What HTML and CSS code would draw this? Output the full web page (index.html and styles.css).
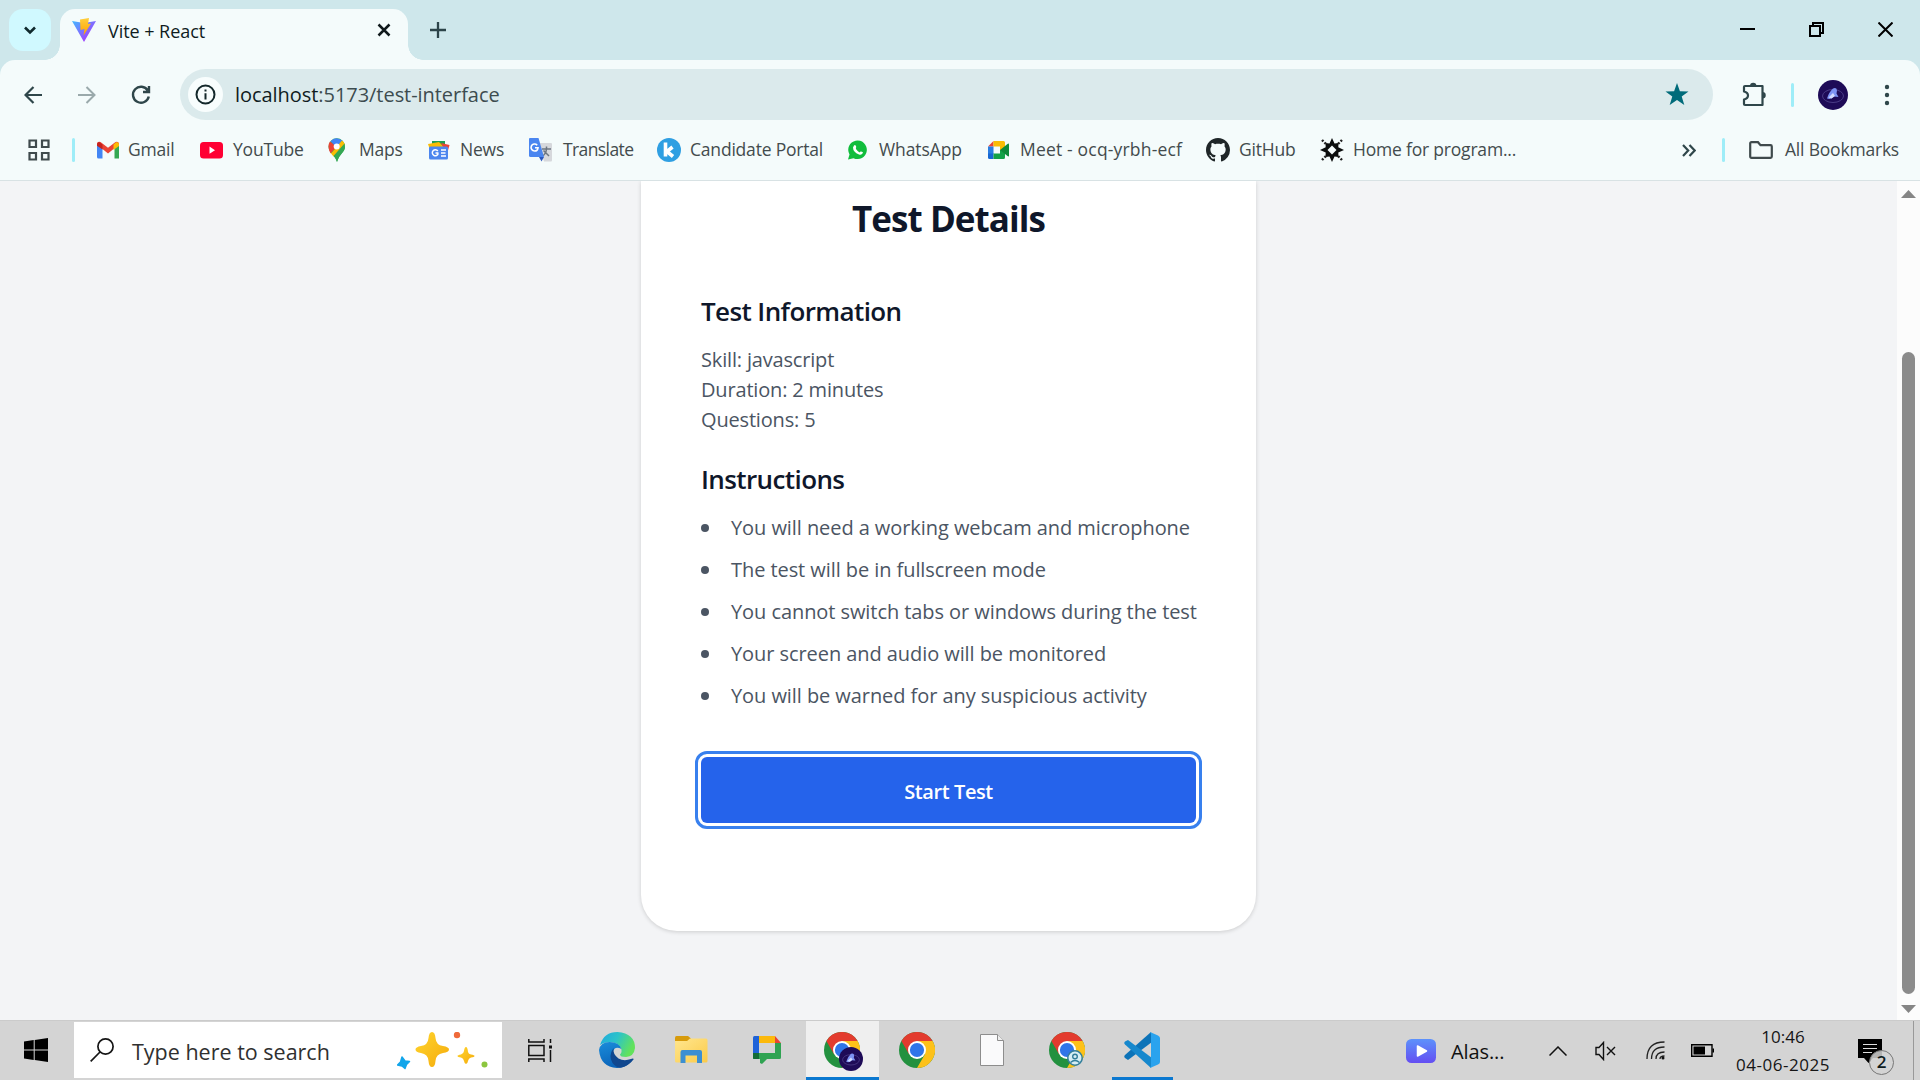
FILE: index.html
```html
<!DOCTYPE html>
<html lang="en">
<head>
<meta charset="utf-8">
<title>Vite + React</title>
<link rel="stylesheet" href="styles.css">
</head>
<body>
<svg class="defs" width="0" height="0" aria-hidden="true">
  <defs>
    <linearGradient id="vite-a" x1="0" y1="0" x2="1" y2="1"><stop offset="0" stop-color="#41b9ff"/><stop offset=".8" stop-color="#a53cff"/></linearGradient>
    <linearGradient id="vite-b" x1="0" y1="0" x2="0" y2="1"><stop offset="0" stop-color="#ffcf3d"/><stop offset="1" stop-color="#ffa000"/></linearGradient>
    <linearGradient id="edge-a" x1="0" y1="0" x2="1" y2=".4"><stop offset="0" stop-color="#1fa8e0"/><stop offset=".5" stop-color="#2cc3c9"/><stop offset="1" stop-color="#62e25c"/></linearGradient>
    <linearGradient id="edge-b" x1="0" y1="0" x2=".4" y2="1"><stop offset="0" stop-color="#1a8ddb"/><stop offset="1" stop-color="#0a62b8"/></linearGradient>
    <linearGradient id="play-a" x1="0" y1="0" x2="0" y2="1"><stop offset="0" stop-color="#5d92fb"/><stop offset="1" stop-color="#644ef2"/></linearGradient>
    <linearGradient id="star-a" x1="0" y1="0" x2="1" y2="1"><stop offset="0" stop-color="#ffd52e"/><stop offset="1" stop-color="#f5ab0c"/></linearGradient>
    <linearGradient id="folder-a" x1="0" y1="0" x2="1" y2="1"><stop offset="0" stop-color="#ffe68f"/><stop offset="1" stop-color="#fbcb4a"/></linearGradient>
    <symbol id="chrome" viewBox="0 0 36 36">
      <circle cx="18" cy="18" r="18" fill="#23913f"/>
      <path d="M18 9H33.6A18 18 0 0 1 18 36L25.8 22.5Z" fill="#fdc11a"/>
      <path d="M2.4 9A18 18 0 0 1 33.6 9H18L10.2 22.5Z" fill="#e33b2e"/>
      <circle cx="18" cy="18" r="9" fill="#fff"/><circle cx="18" cy="18" r="7.1" fill="#3075e8"/>
    </symbol>
    <symbol id="avatar" viewBox="0 0 30 30">
      <circle cx="15" cy="15" r="15" fill="#1e0b57"/>
      <ellipse cx="15" cy="16" rx="10.5" ry="6.5" fill="none" stroke="#4a3c86" stroke-width="1"/>
      <path d="M9 18.5Q11 12 15 8.500 18.500 7 19 10.500L18.500 13.500 20.500 17 16 16.500Q13 20 9 18.500Z" fill="#7d93f2"/><path d="M10.500 17.500 15 13 17 16 13.500 18.500Z" fill="#d3dcff"/>
    </symbol>
  </defs>
</svg>

<header class="browser">
  <div class="tabstrip">
    <button class="tab-search"><svg width="14" height="10" viewBox="0 0 14 10"><path d="M2 2.500 7 7.500 12 2.500" fill="none" stroke="#10292d" stroke-width="2.6"/></svg></button>
    <div class="tab">
      <svg width="24" height="24" viewBox="0 0 24 24"><path d="M0 3 12 5 24 3 12 24Z" fill="url(#vite-a)"/><path d="M8 1.500 17 0 16 6 19 5.500 11.500 17.500 12.500 11 8.500 12Z" fill="url(#vite-b)"/></svg>
      <span class="tab-title">Vite + React</span>
      <svg width="14" height="14" viewBox="0 0 14 14"><path d="M1.500 1.500 12.500 12.500M12.500 1.500 1.500 12.500" stroke="#10191b" stroke-width="2.5"/></svg>
    </div>
    <svg class="new-tab" width="16" height="16" viewBox="0 0 16 16"><path d="M8 0V16M0 8H16" stroke="#2c4449" stroke-width="2.3"/></svg>
    <div class="window-controls">
      <svg width="15" height="15" viewBox="0 0 15 15"><path d="M0 7H15" stroke="#000" stroke-width="2"/></svg>
      <svg width="15" height="15" viewBox="0 0 15 15" fill="none" stroke="#000" stroke-width="2"><path d="M1 4H11V14H1ZM4 4V1H14V11H11"/></svg>
      <svg width="15" height="15" viewBox="0 0 15 15"><path d="M.5.5 14.500 14.500M14.500.5.5 14.500" stroke="#000" stroke-width="2"/></svg>
    </div>
  </div>

  <div class="toolbar">
    <svg width="18" height="18" viewBox="0 0 18 18" fill="none" stroke="#2f464a" stroke-width="2.2"><path d="M18 9H2M9.500 1 1.500 9 9.500 17"/></svg>
    <svg width="18" height="18" viewBox="0 0 18 18" fill="none" stroke="#9aa9ab" stroke-width="2"><path d="M0 9H16M8.500 1 16.500 9 8.500 17"/></svg>
    <svg width="20" height="20" viewBox="0 0 20 20" fill="none" stroke="#2f464a" stroke-width="2.4"><path d="M16.800 5.500A8 8 0 1 0 17.800 11.500M18 1V7H12"/></svg>
    <div class="omnibox">
      <span class="site-info"><svg width="21" height="21" viewBox="0 0 21 21"><circle cx="10.500" cy="10.500" r="9" fill="none" stroke="#14282b" stroke-width="2"/><path d="M9.500 9.200H11.500V15.500H9.500ZM9.500 5.600H11.500V7.600H9.500Z" fill="#14282b"/></svg></span>
      <span class="url"><span class="host">localhost</span>:5173/test-interface</span>
      <svg width="24" height="23" viewBox="0 0 24 23"><path d="M12 0 14.900 8.200 23.500 8.400 16.700 13.600 19.300 22 12 17 4.700 22 7.300 13.600.5 8.400 9.100 8.200Z" fill="#006b7a"/></svg>
    </div>
    <svg class="extensions" width="26" height="26" viewBox="0 0 26 26"><path d="M4 4H21.500V23H4Q3 23 3 22V17.500Q7 16.500 7 13.500 7 10.500 3 9.500V5Q3 4 4 4Z" fill="none" stroke="#2f464a" stroke-width="2.2" stroke-linejoin="round"/><path d="M9 4A3.200 3.200 0 0 1 15.400 4ZM21.500 10A3.200 3.200 0 0 1 21.500 16.500Z" fill="#2f464a"/></svg>
    <i class="divider"></i>
    <svg class="profile" width="30" height="30"><use href="#avatar"/></svg>
    <svg width="6" height="22" viewBox="0 0 6 22" fill="#2f464a"><circle cx="3" cy="3" r="2.200"/><circle cx="3" cy="11" r="2.200"/><circle cx="3" cy="19" r="2.200"/></svg>
  </div>

  <nav class="bookmarks">
    <svg width="22" height="22" viewBox="0 0 22 22" fill="none" stroke="#3f4a4c" stroke-width="2.200"><path d="M1.500 1.500H8V8H1.500ZM14 1.500H20.500V8H14ZM1.500 14H8V20.500H1.500ZM14 14H20.500V20.500H14Z"/></svg>
    <i class="divider"></i>
    <div class="bookmark-list">
      <a><svg viewBox="0 0 24 24"><path d="M0 6.500V19Q0 20.500 1.500 20.500H5.500V9Z" fill="#4285f4"/><path d="M22 6.500V20.500H17.500V9L18 5Z" fill="#34a853"/><path d="M0 6.500Q0 3 3.500 4L11 9.800 18.500 4Q22 3 22 6.500L11 15.500Z" fill="#ea4335"/><path d="M0 6.500Q0 4 2.200 4L5.500 6.500V11.500L0 7.800Z" fill="#c5221f"/><path d="M16.500 6.500 19 4.300Q22 3.500 22 6.500V8L16.500 12Z" fill="#fbbc04"/></svg><span>Gmail</span></a>
      <a><svg viewBox="0 0 24 24"><rect y="4" width="23" height="16.500" rx="3.500" fill="#ff0033"/><path d="M9.500 8.500 15 12.200 9.500 15.800Z" fill="#fff"/></svg><span>YouTube</span></a>
      <a><svg viewBox="0 0 24 24"><path d="M3.500 8.500A8.200 8.200 0 0 1 20 8.500C20 14.500 14.500 15.500 12 24 9.500 16 3.500 14.500 3.500 8.500Z" fill="#34a853"/><path d="M5 3.500 12 8.500 5.500 15.500Q3.500 12 3.500 8.500 3.500 5.500 5 3.500Z" fill="#ea4335"/><path d="M5.500 3.200Q11-2.500 17.500 2.800L11.500 9.500Z" fill="#4285f4"/><path d="M17 2.500 6 15.500 8.500 18.500 20 8.500Q20 4.500 17 2.500Z" fill="#fbbc04"/><path d="M20 8.500C20 14.500 14.500 15.500 12 24 11 20.500 9.800 19.500 8.500 18L19.500 5.500Z" fill="#34a853"/><circle cx="11.700" cy="8.500" r="3" fill="#fff"/></svg><span>Maps</span></a>
      <a><svg viewBox="0 0 24 24"><path d="M5 3H18V10H5Z" fill="#1e9e51"/><path d="M1 6 12 4 20 12H3Z" fill="#fbbc04"/><path d="M14 5 22.500 7 20 16Z" fill="#ea4335"/><rect x="2" y="8.500" width="19" height="13" rx="1.500" fill="#4c86ee"/><path d="M14 12H19M14 15H18.500M14 18H19" stroke="#fff" stroke-width="1.600"/><path d="M11.500 15H8.500M10.800 13A3 3 0 1 0 11.200 15.500" fill="none" stroke="#fff" stroke-width="1.500"/></svg><span>News</span></a>
      <a><svg viewBox="0 0 24 24"><path d="M9 5H22Q23 5 23 6V22Q23 23.500 22 23.500H15Z" fill="#d6d8dc"/><path d="M13 11H22M17.500 8.500V11Q17 16 13 18.500M14.500 12.500 20 18" fill="none" stroke="#6c7681" stroke-width="1.500"/><path d="M1 0H9.500L15 19H1.500Q0 19 0 17.500V1Q0 0 1 0Z" fill="#4a86f0"/><path d="M10 19H15L12.500 23.500Z" fill="#2b59bf"/><path d="M6 9.800H9Q8.500 13 5.800 13A3.500 3.500 0 1 1 8.200 7.200" fill="none" stroke="#fff" stroke-width="1.600"/></svg><span>Translate</span></a>
      <a><svg viewBox="0 0 24 24"><circle cx="12" cy="12" r="12" fill="#2f9fe2"/><path d="M8.500 4.500V18.500M15.500 9 10 13.500 16 18.500" fill="none" stroke="#fff" stroke-width="3.600"/></svg><span>Candidate Portal</span></a>
      <a><svg viewBox="0 0 24 24"><path d="M2 21.500 3.500 16.500A9.300 9.300 0 1 1 7.500 20.200Z" fill="#10bd3c"/><path d="M8 7.500Q9.500 6 10.300 9 8.500 10.500 13.500 14.500 14.500 12.500 17 14.300 16.500 17.500 13 16.500 7 14 7 9.500Z" fill="#fff"/></svg><span>WhatsApp</span></a>
      <a><svg viewBox="0 0 24 24"><path d="M1 8.500 6.500 3V8.500Z" fill="#ea4335"/><path d="M6.500 3H16.500Q18 3 18 4.500V12H13V8.500H6.500Z" fill="#fbbc04"/><path d="M1 8.500H6.500V16H1Z" fill="#2a7de1"/><path d="M1 15.500H6.500V21H2.500Q1 21 1 19.500Z" fill="#1668d2"/><path d="M6.500 15.500H13V12H18V19.500Q18 21 16.500 21H6.500Z" fill="#12a148"/><path d="M13 12 20.500 6Q22 5 22 6.500V17.500Q22 19 20.500 18Z" fill="#0d8a3a"/></svg><span>Meet - ocq-yrbh-ecf</span></a>
      <a><svg viewBox="0 0 16 16"><path fill="#1f2628" d="M8 0C3.580 0 0 3.580 0 8c0 3.540 2.290 6.530 5.470 7.590.4.070.55-.17.55-.38 0-.19-.010-.82-.010-1.490-2.010.37-2.530-.49-2.690-.94-.090-.23-.48-.94-.82-1.130-.28-.15-.68-.52-.010-.53.63-.010 1.080.58 1.230.82.72 1.210 1.870.87 2.330.66.070-.52.28-.87.510-1.070-1.780-.2-3.640-.89-3.640-3.950 0-.87.310-1.590.82-2.150-.080-.2-.36-1.020.080-2.120 0 0 .67-.21 2.200.82.64-.18 1.320-.27 2-.27s1.360.090 2 .27c1.530-1.040 2.200-.82 2.200-.82.44 1.100.16 1.920.080 2.120.510.56.82 1.270.82 2.150 0 3.070-1.870 3.750-3.650 3.950.29.25.54.73.54 1.480 0 1.070-.010 1.930-.010 2.200 0 .21.15.46.55.38A8.010 8.010 0 0 0 16 8c0-4.420-3.580-8-8-8Z"/></svg><span>GitHub</span></a>
      <a><svg viewBox="0 0 24 24"><path d="M12 0 14.500 5.500 18.500 5 18.300 9.300 24 12 18.300 14.500 18.500 19 14.500 18.500 12 24 9.500 18.500 5.500 19 5.700 14.500 0 12 5.700 9.300 5.500 5 9.500 5.500Z" fill="#0b0d0d"/><path d="M2 2 6 6M22 2 18 6M2 22 6 18M22 22 18 18" stroke="#222" stroke-width="2.400" stroke-dasharray="2 1.500"/><path d="M12 7.500 16.500 12 12 16.500 7.500 12Z" fill="#f4fbfb"/></svg><span>Home for program...</span></a>
    </div>
    <svg class="more" width="14" height="13" viewBox="0 0 14 13" fill="none" stroke="#2f464a" stroke-width="2.200"><path d="M1 1 6.200 6.500 1 12M7.500 1 12.700 6.500 7.500 12"/></svg>
    <i class="divider"></i>
    <a class="all"><svg viewBox="0 0 24 18"><path d="M2.500 1.200H9L11.500 4.200H21.500Q22.800 4.200 22.800 5.500V15.500Q22.800 16.800 21.500 16.800H2.500Q1.200 16.800 1.200 15.500V2.500Q1.200 1.200 2.500 1.200Z" fill="none" stroke="#3f4a4c" stroke-width="2.200"/></svg><span>All Bookmarks</span></a>
  </nav>
</header>

<div class="viewport">
  <main class="page">
    <section class="card">
      <h1>Test Details</h1>
      <h2>Test Information</h2>
      <p>Skill: javascript</p>
      <p>Duration: 2 minutes</p>
      <p>Questions: 5</p>
      <h2 class="second">Instructions</h2>
      <ul>
        <li>You will need a working webcam and microphone</li>
        <li>The test will be in fullscreen mode</li>
        <li>You cannot switch tabs or windows during the test</li>
        <li>Your screen and audio will be monitored</li>
        <li>You will be warned for any suspicious activity</li>
      </ul>
      <button class="start">Start Test</button>
    </section>
  </main>
  <div class="scrollbar">
    <svg width="15" height="8" viewBox="0 0 15 8"><path d="M0 8 7.500 0 15 8Z" fill="#858585"/></svg>
    <i class="thumb"></i>
    <svg width="15" height="8" viewBox="0 0 15 8"><path d="M0 0 7.500 8 15 0Z" fill="#858585"/></svg>
  </div>
</div>

<footer class="taskbar">
  <div class="win"><svg width="24" height="24" viewBox="0 0 24 24"><path d="M0 3.500 9.700 2.100V11.400H0ZM10.700 1.900 24 0V11.400H10.700ZM0 12.600H9.700V22L0 20.600ZM10.700 12.600H24V24L10.700 22.100Z"/></svg></div>
  <div class="search">
    <svg width="24" height="24" viewBox="0 0 24 24" fill="none" stroke="#151515" stroke-width="1.700"><circle cx="15.500" cy="8.500" r="7.600"/><path d="M10 14 .7 23.300"/></svg>
    <span>Type here to search</span>
    <svg class="sparkles" width="92" height="38" viewBox="0 0 92 38"><path d="M35 0Q38 0 38.500 6 39 13 46 14 52 15 52 17.500 52 20 46 21 39 22 38.500 29 38 35 35 35 32 35 31.500 29 31 22 24 21 18.500 20 18.500 17.500 18.500 15 24 14 31 13 31.500 6 32 0 35 0Z" fill="url(#star-a)"/><path d="M69 15Q70.500 15 71 20 71.500 22 74 22.500 77.500 23 77.500 24 77.500 25 74 25.500 71.500 26 71 29 70.500 32 69 32 67.500 32 67 29 66.500 26 64 25.500 60.500 25 60.500 24 60.500 23 64 22.500 66.500 22 67 19 67.500 15 69 15Z" fill="url(#star-a)"/><path d="M5 25 8 29 12.500 29.500 9.500 32.500 8 36.500 5 34 .5 33 3.500 30Z" fill="#12a5ea" stroke="#12a5ea" stroke-width="1.500" stroke-linejoin="round"/><circle cx="60" cy="3" r="3.200" fill="#ef6a3a"/><circle cx="87.500" cy="32.500" r="3" fill="#8cc63e"/></svg>
  </div>
  <div class="apps">
    <div class="app"><svg width="24" height="23" viewBox="0 0 24 23" fill="none" stroke="#111" stroke-width="1.500"><path d="M.8 0V3H16V0M.8 23V20H16V23M.8 6.500H16V16.500H.8ZM22.500 0V4M22.500 11V23"/><path d="M21 6.500H24V9.500H21Z" fill="#111" stroke="none"/></svg></div>
    <div class="app"><svg width="36" height="36" viewBox="0 0 36 36"><path d="M1 13Q5 0 18.500 0 36 1.500 36 16 35 24.500 27 25 21 25 21 22.500 23.500 20.500 22 16 19 10 10 10 4 10.500 1 13Z" fill="url(#edge-a)"/><path d="M0 18Q1.500 10 10.500 10 20 10 22.500 17 15.500 13.500 14 20 14 29 25 29 31 29 34.500 27 28 36 18 36 1.500 35 0 18Z" fill="url(#edge-b)"/><path d="M14.500 16Q9 24 13.500 31 16.500 35 21 35.700 29.500 34.500 34.800 27 34 26 32 27 25 29.500 19.500 26.500 13.500 22 14.500 16Z" fill="#10478f"/></svg></div>
    <div class="app"><svg width="33" height="28" viewBox="0 0 33 28"><path d="M1.500 0H13L16 2.500 14 5.500H0V2Q0 0 1.500 0Z" fill="#d79b0c"/><path d="M0 5H12L15 2.500H31Q32.500 2.500 32.500 4V25Q32.500 26.500 31 26.500H1.500Q0 26.500 0 25Z" fill="url(#folder-a)"/><path d="M5.500 27V16Q5.500 14 7.500 14H25Q27 14 27 16V27H22V19.500H10.500V27Z" fill="#3c8fd2"/></svg></div>
    <div class="app"><svg width="28" height="28" viewBox="0 0 28 28"><path d="M1.500 0H6V17H0V1.500Q0 0 1.500 0Z" fill="#1f63d8"/><path d="M6 0H22V7H6Z" fill="#fcb90c"/><path d="M22 0 28 7H22Z" fill="#e94335"/><path d="M22 7H28V21.500Q28 23 26.500 23H14L9 28 7 27V23H0V17H22Z" fill="#2fa352"/><path d="M0 17H6V23H1.500Q0 23 0 21.500Z" fill="#146c37"/></svg></div>
    <div class="app active"><svg width="36" height="36"><use href="#chrome"/></svg><svg class="badge" width="24" height="24"><use href="#avatar"/></svg></div>
    <div class="app"><svg width="36" height="36"><use href="#chrome"/></svg></div>
    <div class="app"><svg width="24" height="32" viewBox="0 0 24 32"><path d="M.5.5H17.500L23.500 6.500V31.500H.5Z" fill="#fafafb" stroke="#8d8d8d"/><path d="M17.500.5V6.500H23.500" fill="#eee" stroke="#8d8d8d"/></svg></div>
    <div class="app"><svg width="36" height="36"><use href="#chrome"/></svg><svg class="badge small" width="16" height="16" viewBox="0 0 16 16"><circle cx="8" cy="8" r="7.200" fill="#d6eef4" stroke="#337f9b" stroke-width="1.500"/><circle cx="8" cy="6.500" r="2.300" fill="none" stroke="#337f9b" stroke-width="1.400"/><path d="M3.500 12.500Q8 8.500 12.500 12.500" fill="none" stroke="#337f9b" stroke-width="1.500"/></svg></div>
    <div class="app running"><svg width="36" height="36" viewBox="0 0 36 36"><path d="M27 0 28 10 4 28 1 26Q-.5 24.500 1 23Z" fill="#0c73b8"/><path d="M1 12.500Q-.5 11 1 9.500L4 8 28 26 27 36Z" fill="#1688cd"/><path d="M26 0 34 3.500Q36 4.500 36 6V30Q36 31.500 34 32.500L26 36 27 34V2Z" fill="#2aa3ee"/></svg></div>
  </div>
  <div class="tray">
    <svg class="play" width="30" height="24" viewBox="0 0 30 24"><rect width="30" height="24" rx="5.500" fill="url(#play-a)"/><path d="M11.500 7 20.500 12 11.500 17Z" fill="#fff" stroke="#fff" stroke-width="1.500" stroke-linejoin="round"/></svg>
    <span class="news">Alas...</span>
    <svg class="chev" width="18" height="10" viewBox="0 0 18 10"><path d="M.5 9.500 9 1 17.500 9.500" fill="none" stroke="#111" stroke-width="1.500"/></svg>
    <svg class="vol" width="21" height="20" viewBox="0 0 21 20" fill="none" stroke="#111" stroke-width="1.400"><path d="M1 6.500H4L8.500 1.500V18.500L4 13.500H1ZM12 6 20 14M20 6 12 14"/></svg>
    <svg class="wifi" width="19" height="19" viewBox="0 0 19 19" fill="none" stroke="#222" stroke-width="1.300"><path d="M1 18Q1 1 18.500 1M5.500 18Q5.500 6 18.500 6M10 18Q10 11 18.500 11M14 18Q14 15 18.500 15"/><circle cx="17" cy="17" r="1.500" fill="#111" stroke="none"/></svg>
    <svg class="bat" width="23" height="13" viewBox="0 0 23 13"><path d="M.7.7H21V12.300H.7Z" fill="none" stroke="#000" stroke-width="1.400"/><path d="M2.500 2.500H14V10.500H2.500ZM21.500 4.500H23V8.500H21.500Z"/></svg>
    <div class="clock"><span>10:46</span><span class="date">04-06-2025</span></div>
    <div class="notify"><svg width="24" height="24" viewBox="0 0 24 24"><path d="M0 0H24V19H15L10.500 24 6 19H0Z"/><path d="M5 5.500H19M5 9.500H19M5 13.500H14" stroke="#ddd" stroke-width="1.200"/></svg><b>2</b></div>
    <i class="peek"></i>
  </div>
</footer>
</body>
</html>
```
FILE: styles.css
```css
* { box-sizing: border-box; }
body {
  margin: 0; width: 1920px; height: 1080px; overflow: hidden;
  display: flex; flex-direction: column;
  font-family: "Open Sans", "Noto Sans", sans-serif; color: #0f1c1e; background: #f3f4f6;
}
svg { display: block; flex: none; }
.defs { position: absolute; }
button { border: 0; padding: 0; font: inherit; }
h1, h2, p, ul { margin: 0; padding: 0; }
i { flex: none; }

/* Browser chrome */
.browser { height: 181px; background: #cee7eb; border-bottom: 1px solid #d8e2e4; flex: none; display: flex; flex-direction: column; }
.tabstrip { height: 60px; display: flex; padding-left: 9px; align-items: flex-start; flex: none; }
.tab-search { width: 42px; height: 42px; margin-top: 9px; border-radius: 14px; background: #d0f9ff; display: flex; align-items: center; justify-content: center; }
.tab { position: relative; width: 348px; height: 51px; margin: 9px 0 0 9px; padding: 0 17px 9px 12px; border-radius: 15px 15px 0 0; background: #f4fbfb; display: flex; align-items: center; }
.tab::before, .tab::after { content: ""; position: absolute; bottom: 0; width: 15px; height: 15px; }
.tab::before { left: -15px; background: radial-gradient(circle at 0 0, transparent 14.5px, #f4fbfb 15px); }
.tab::after { right: -15px; background: radial-gradient(circle at 100% 0, transparent 14.5px, #f4fbfb 15px); }
.tab-title { flex: 1; margin: 1px 0 0 12px; font-size: 18px; line-height: 24px; letter-spacing: -.05px; }
.new-tab { margin: 22px 0 0 22px; }
.window-controls { display: flex; gap: 54px; margin: 22px 27px 0 auto; }

.toolbar { height: 60px; padding: 9px 30px 0 24px; border-radius: 15px 15px 0 0; background: #f4fbfb; display: flex; align-items: center; flex: none; }
.toolbar > svg:nth-child(2) { margin-left: 36px; }
.toolbar > svg:nth-child(3) { margin-left: 35px; }
.omnibox { width: 1533px; height: 51px; margin-left: 29px; padding: 0 24px 0 8px; border-radius: 26px; background: #dbeaec; display: flex; align-items: center; flex: none; }
.site-info { width: 35px; height: 35px; border-radius: 50%; background: #f8fdfd; display: flex; align-items: center; justify-content: center; }
.url { flex: 1; margin-left: 12px; font-size: 20px; letter-spacing: -.05px; color: #3d4c4f; }
.host { color: #101c1e; }
.divider { width: 3px; height: 24px; border-radius: 2px; background: #9eedf8; }
.extensions { margin: 0 24px 0 28px; }
.profile { margin: 0 36px 0 24px; }

.bookmarks { flex: 1; padding: 0 0 0 28px; background: #f4fbfb; display: flex; align-items: center; font-size: 17.5px; letter-spacing: -.2px; color: #434b4d; }
.bookmarks > .divider:nth-child(2) { margin: 0 22px; }
.bookmarks a { display: flex; align-items: center; gap: 9px; white-space: nowrap; }
.bookmarks a svg { width: 24px; height: 24px; }
.bookmarks a span { margin-top: -2px; }
.bookmark-list { display: grid; grid-template-columns: 103px 125px 102px 102px 128px 189px 141px 219px 114px 362px; }
.bookmark-list a:nth-child(1) svg { margin-right: -2px; }
.bookmark-list a:nth-child(3) { gap: 10px; }
.bookmark-list a:nth-child(5) { letter-spacing: -.6px; gap: 10px; }
.bookmark-list a:nth-child(7) { letter-spacing: -.1px; }
.bookmark-list a:nth-child(8) { letter-spacing: .18px; }
.more { margin-right: 26px; }
.bookmarks .all { margin-left: 24px; gap: 12px; }
.bookmarks .all svg { height: 18px; }

/* Page */
.viewport { height: 839px; display: flex; flex: none; }
.page { width: 1897px; display: flex; justify-content: center; align-items: flex-start; overflow: hidden; }
.card { width: 615px; height: 750px; padding: 18px 60px 0; background: #fff; border-radius: 0 0 36px 36px; box-shadow: 0 1px 4px rgba(0,0,0,.16); color: #4b5563; font-size: 20px; }
h1 { text-align: center; font-size: 35px; line-height: 40px; letter-spacing: -.95px; color: #0f172a; }
h2 { margin: 51px 0 13px; font-size: 26px; font-weight: 600; line-height: 42px; letter-spacing: -.6px; color: #0f172a; }
h2.second { margin: 23px 0 13px; }
p { line-height: 30px; letter-spacing: -.17px; }
ul { list-style: none; display: grid; gap: 12px; letter-spacing: -.07px; }
li { display: flex; align-items: center; line-height: 30px; white-space: nowrap; }
li::before { content: ""; width: 8px; height: 8px; margin-right: 22px; border-radius: 50%; background: #4b5563; }
.start { width: 495px; height: 66px; margin-top: 46px; padding-top: 2px; border-radius: 6px; background: #2563eb; color: #fff; font-size: 20px; font-weight: 600; letter-spacing: -.4px; outline: 3px solid #3880ee; outline-offset: 3px; }

.scrollbar { width: 23px; background: #fcfcfc; display: flex; flex-direction: column; align-items: center; padding: 9px 0 7px; }
.thumb { width: 13px; height: 642px; margin: 154px 0 11px; border-radius: 7px; background: #8b8b8b; }

/* Taskbar */
.taskbar { height: 60px; background: #d4d4d4; border-top: 1px solid #cbcbcb; display: flex; }
.win { width: 74px; padding: 17px 0 0 24px; }
.search { width: 428px; height: 56px; margin-top: 1px; padding: 0 13px 0 16px; background: #fff; display: flex; align-items: center; font-size: 21.5px; color: #303030; }
.search span { margin: 2px auto 0 18px; }
.sparkles { margin-top: 2px; }
.apps { margin-left: 3px; display: grid; grid-template-columns: repeat(9, 75px); margin-right: auto; }
.app { position: relative; display: flex; align-items: center; justify-content: center; padding: 0 2px 1px 0; }
.app:first-child { padding-right: 5px; }
.active { background: linear-gradient(#efefef, #efefef) center / 73px 100% no-repeat; }
.active::after, .running::after { content: ""; position: absolute; bottom: 0; left: 1px; width: 73px; height: 3px; background: #0b78d0; }
.running::after { left: 7px; width: 61px; }
.badge { position: absolute; left: 34px; top: 26px; }
.badge.small { left: 37px; top: 29px; }
.tray { width: 514px; display: flex; align-items: center; }
.news { margin: 0 44px 0 15px; padding-top: 2px; width: 54px; font-size: 20px; letter-spacing: -.1px; color: #111; }
.vol { margin: 0 30px 0 28px; }
.bat { margin: 0 21px 0 26px; }
.clock { width: 96px; display: flex; flex-direction: column; align-items: center; font-size: 17px; line-height: 28px; color: #151515; }
.date { letter-spacing: .55px; }
.notify { position: relative; margin: 0 31px 0 27px; }
.notify b { position: absolute; left: 11px; top: 11px; width: 25px; height: 25px; border: 1.5px solid #777; border-radius: 50%; background: rgba(212,212,212,.85); font-size: 17px; font-weight: 600; line-height: 22px; text-align: center; }
.peek { width: 1px; height: 59px; background: #999; }
```
